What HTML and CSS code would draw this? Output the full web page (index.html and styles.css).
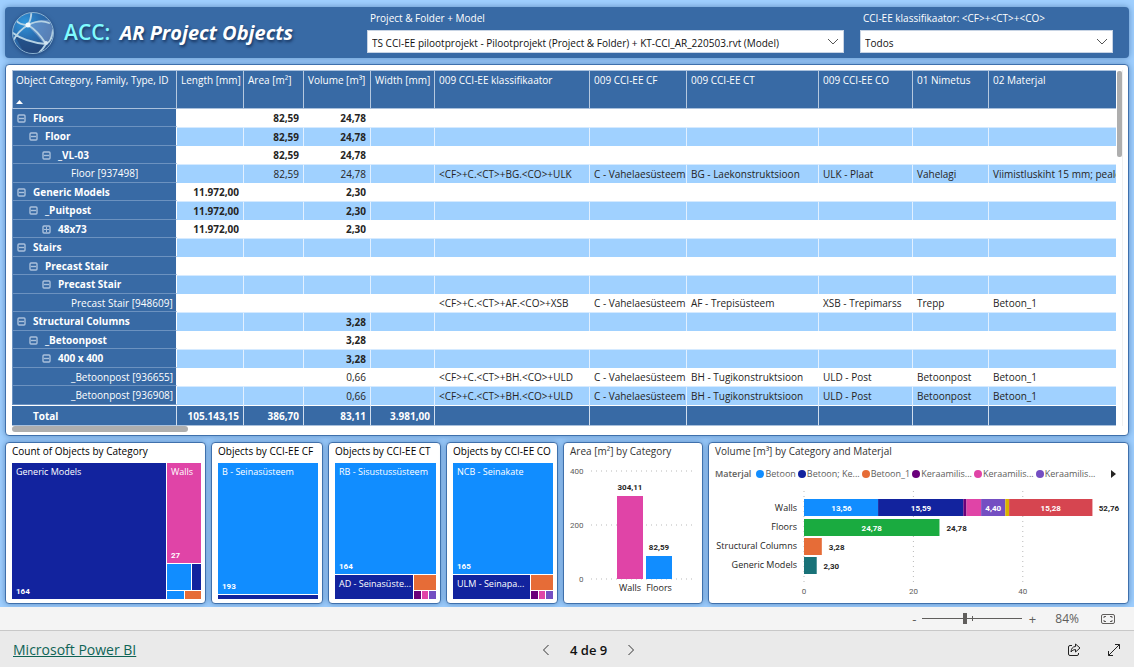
FILE: index.html
```html
<!DOCTYPE html>
<html lang="en">
<head>
<meta charset="utf-8">
<title>ACC: AR Project Objects</title>
<link rel="stylesheet" href="styles.css">
</head>
<body>
<svg class="defs" width="0" height="0" aria-hidden="true">
  <symbol id="minus" viewBox="0 0 9 9"><rect x="1" y="1" width="7" height="7" rx="1" fill="none" stroke="currentColor" stroke-width="1.400"/><path d="M2 4.500h5" stroke="currentColor" stroke-width="1.400"/></symbol>
  <symbol id="plus" viewBox="0 0 9 9"><rect x="1" y="1" width="7" height="7" rx="1" fill="none" stroke="currentColor" stroke-width="1.400"/><path d="M2 4.500h5M4.500 2v5" stroke="currentColor"/></symbol>
</svg>
<main class="report">
  <header class="banner">
    <svg class="globe" viewBox="0 0 44 44" aria-hidden="true">
      <defs>
        <radialGradient id="g1" cx=".3" cy=".25" r=".85"><stop offset="0" stop-color="#2f96dc"/><stop offset=".45" stop-color="#2a6fb2"/><stop offset="1" stop-color="#284f86"/></radialGradient>
        <clipPath id="gc"><circle cx="22" cy="22" r="20"/></clipPath>
      </defs>
      <circle cx="22" cy="22" r="20.500" fill="url(#g1)" stroke="#8db4d3"/>
      <g clip-path="url(#gc)" fill="none" stroke-linecap="round">
        <path d="M17 15Q27 6 42 10L43 25 33 33Q26 24 17 15Z" fill="#7f9fd0" opacity=".55"/>
        <path d="M3 24Q15 29 33 33L28 43H14Z" fill="#1f3f72" opacity=".6"/>
        <path d="M17 14Q8 14 5 9M17 14Q21 6 20 1M17 14Q29 8 38 12M17 14Q27 20 35 33M17 14Q7 20 2 30M2 22Q14 31 35 33M42 19Q41 30 35 33M35 33Q32 38 27 43" stroke="#b5d2e4" stroke-width="1.900"/>
        <circle cx="17" cy="14" r="2.500" fill="#f2f9fd"/><circle cx="35" cy="32" r="2" fill="#d3e6f2"/>
      </g>
    </svg>
    <h1 class="title"><span class="acc">ACC:</span> <em>AR Project Objects</em></h1>
    <div class="field field-model">
      <label for="model">Project &amp; Folder + Model</label>
      <div class="pick">
        <select id="model"><option>TS CCI-EE pilootprojekt - Pilootprojekt (Project &amp; Folder) + KT-CCI_AR_220503.rvt (Model)</option></select>
        <svg viewBox="0 0 12 8" aria-hidden="true"><path d="M1 1l5 5 5-5"/></svg>
      </div>
    </div>
    <div class="field field-class">
      <label for="klass">CCI-EE klassifikaator: &lt;CF&gt;+&lt;CT&gt;+&lt;CO&gt;</label>
      <div class="pick">
        <select id="klass"><option>Todos</option></select>
        <svg viewBox="0 0 12 8" aria-hidden="true"><path d="M1 1l5 5 5-5"/></svg>
      </div>
    </div>
  </header>

  <section class="panel matrix">
    <div class="matrix-body">
    <table>
      <colgroup><col class="c-name"><col class="c-len"><col class="c-area"><col class="c-vol"><col class="c-wid"><col class="c-kl"><col class="c-cf"><col class="c-ct"><col class="c-co"><col class="c-nim"><col></colgroup>
      <thead><tr>
        <th>Object Category, Family, Type, ID<svg class="sort" viewBox="0 0 7 4" aria-hidden="true"><path d="M0 4L3.500 0 7 4z"/></svg></th>
        <th>Length [mm]</th><th>Area [m²]</th><th>Volume [m³]</th><th>Width [mm]</th><th>009 CCI-EE klassifikaator</th><th>009 CCI-EE CF</th><th>009 CCI-EE CT</th><th>009 CCI-EE CO</th><th>01 Nimetus</th><th>02 Materjal</th>
      </tr></thead>
      <tbody>
        <tr class="sum"><th class="l1"><button aria-label="Collapse"><svg><use href="#minus"/></svg></button>Floors</th><td></td><td>82,59</td><td>24,78</td><td></td><td></td><td></td><td></td><td></td><td></td><td></td></tr>
        <tr class="sum"><th class="l2"><button aria-label="Collapse"><svg><use href="#minus"/></svg></button>Floor</th><td></td><td>82,59</td><td>24,78</td><td></td><td></td><td></td><td></td><td></td><td></td><td></td></tr>
        <tr class="sum"><th class="l3"><button aria-label="Collapse"><svg><use href="#minus"/></svg></button>_VL-03</th><td></td><td>82,59</td><td>24,78</td><td></td><td></td><td></td><td></td><td></td><td></td><td></td></tr>
        <tr><th class="l4">Floor [937498]</th><td></td><td>82,59</td><td>24,78</td><td></td><td>&lt;CF&gt;+C.&lt;CT&gt;+BG.&lt;CO&gt;+ULK</td><td>C - Vahelaesüsteem</td><td>BG - Laekonstruktsioon</td><td>ULK - Plaat</td><td>Vahelagi</td><td>Viimistluskiht 15 mm; peale</td></tr>
        <tr class="sum"><th class="l1"><button aria-label="Collapse"><svg><use href="#minus"/></svg></button>Generic Models</th><td>11.972,00</td><td></td><td>2,30</td><td></td><td></td><td></td><td></td><td></td><td></td><td></td></tr>
        <tr class="sum"><th class="l2"><button aria-label="Collapse"><svg><use href="#minus"/></svg></button>_Puitpost</th><td>11.972,00</td><td></td><td>2,30</td><td></td><td></td><td></td><td></td><td></td><td></td><td></td></tr>
        <tr class="sum"><th class="l3"><button aria-label="Expand"><svg><use href="#plus"/></svg></button>48x73</th><td>11.972,00</td><td></td><td>2,30</td><td></td><td></td><td></td><td></td><td></td><td></td><td></td></tr>
        <tr class="sum"><th class="l1"><button aria-label="Collapse"><svg><use href="#minus"/></svg></button>Stairs</th><td></td><td></td><td></td><td></td><td></td><td></td><td></td><td></td><td></td><td></td></tr>
        <tr class="sum"><th class="l2"><button aria-label="Collapse"><svg><use href="#minus"/></svg></button>Precast Stair</th><td></td><td></td><td></td><td></td><td></td><td></td><td></td><td></td><td></td><td></td></tr>
        <tr class="sum"><th class="l3"><button aria-label="Collapse"><svg><use href="#minus"/></svg></button>Precast Stair</th><td></td><td></td><td></td><td></td><td></td><td></td><td></td><td></td><td></td><td></td></tr>
        <tr><th class="l4">Precast Stair [948609]</th><td></td><td></td><td></td><td></td><td>&lt;CF&gt;+C.&lt;CT&gt;+AF.&lt;CO&gt;+XSB</td><td>C - Vahelaesüsteem</td><td>AF - Trepisüsteem</td><td>XSB - Trepimarss</td><td>Trepp</td><td>Betoon_1</td></tr>
        <tr class="sum"><th class="l1"><button aria-label="Collapse"><svg><use href="#minus"/></svg></button>Structural Columns</th><td></td><td></td><td>3,28</td><td></td><td></td><td></td><td></td><td></td><td></td><td></td></tr>
        <tr class="sum"><th class="l2"><button aria-label="Collapse"><svg><use href="#minus"/></svg></button>_Betoonpost</th><td></td><td></td><td>3,28</td><td></td><td></td><td></td><td></td><td></td><td></td><td></td></tr>
        <tr class="sum"><th class="l3"><button aria-label="Collapse"><svg><use href="#minus"/></svg></button>400 x 400</th><td></td><td></td><td>3,28</td><td></td><td></td><td></td><td></td><td></td><td></td><td></td></tr>
        <tr><th class="l4">_Betoonpost [936655]</th><td></td><td></td><td>0,66</td><td></td><td>&lt;CF&gt;+C.&lt;CT&gt;+BH.&lt;CO&gt;+ULD</td><td>C - Vahelaesüsteem</td><td>BH - Tugikonstruktsioon</td><td>ULD - Post</td><td>Betoonpost</td><td>Betoon_1</td></tr>
        <tr><th class="l4">_Betoonpost [936908]</th><td></td><td></td><td>0,66</td><td></td><td>&lt;CF&gt;+C.&lt;CT&gt;+BH.&lt;CO&gt;+ULD</td><td>C - Vahelaesüsteem</td><td>BH - Tugikonstruktsioon</td><td>ULD - Post</td><td>Betoonpost</td><td>Betoon_1</td></tr>
      </tbody>
      <tfoot><tr><th>Total</th><td>105.143,15</td><td>386,70</td><td>83,11</td><td>3.981,00</td><td></td><td></td><td></td><td></td><td></td><td></td></tr></tfoot>
    </table>
    <div class="vbar"><i></i></div>
    </div>
    <div class="hbar"><i></i></div>
  </section>

  <div class="cards">
    <section class="panel card">
      <h2>Count of Objects by Category</h2>
      <div class="tree t-cat">
        <div class="tile navy main"><span>Generic Models</span><b>164</b></div>
        <div class="side">
          <div class="tile pink walls"><span>Walls</span><b>27</b></div>
          <div class="pair p1"><div class="blue"></div><div class="navy"></div></div>
          <div class="pair p2"><div class="blue"></div><div class="orange"></div></div>
        </div>
      </div>
    </section>
    <section class="panel card">
      <h2>Objects by CCI-EE CF</h2>
      <div class="tree t-cf">
        <div class="tile blue"><span>B - Seinasüsteem</span><b>193</b></div>
        <div class="navy"></div>
      </div>
    </section>
    <section class="panel card">
      <h2>Objects by CCI-EE CT</h2>
      <div class="tree t-ct">
        <div class="tile blue"><span>RB - Sisustussüsteem</span><b>164</b></div>
        <div class="low">
          <div class="tile navy"><span>AD - Seinasüste...</span></div>
          <div class="corner"><div class="orange"></div><div class="trio"><div class="purple"></div><div class="pink"></div><div class="violet"></div></div></div>
        </div>
      </div>
    </section>
    <section class="panel card">
      <h2>Objects by CCI-EE CO</h2>
      <div class="tree t-co">
        <div class="tile blue"><span>NCB - Seinakate</span><b>165</b></div>
        <div class="low">
          <div class="tile navy"><span>ULM - Seinapa...</span></div>
          <div class="corner"><div class="orange"></div><div class="trio"><div class="purple"></div><div class="pink"></div><div class="violet"></div></div></div>
        </div>
      </div>
    </section>
    <section class="panel card">
      <h2 class="soft">Area [m²] by Category</h2>
      <svg class="area" role="img" aria-label="Area by category">
        <g class="grid"><path d="M21 8h104M21 62h104M21 116h104"/></g>
        <g class="axis"><text x="0" y="11">400</text><text x="0" y="65">200</text><text x="9" y="119">0</text></g>
        <rect x="47" y="33" width="26" height="83" fill="#e044a7"/>
        <rect x="76" y="93" width="26" height="23" fill="#118dff"/>
        <g class="val"><text x="60" y="27">304,11</text><text x="89" y="87">82,59</text></g>
        <g class="cat"><text x="60" y="128">Walls</text><text x="89" y="128">Floors</text></g>
      </svg>
    </section>
    <section class="panel card">
      <h2 class="soft">Volume [m³] by Category and Materjal</h2>
      <div class="legend">
        <strong>Materjal</strong>
        <span><i class="blue"></i>Betoon</span><span><i class="navy"></i>Betoon; Ke...</span><span><i class="orange"></i>Betoon_1</span><span><i class="purple"></i>Keraamilis...</span><span><i class="pink"></i>Keraamilis...</span><span><i class="violet"></i>Keraamilis...</span>
        <button class="next" aria-label="Next"><svg viewBox="0 0 5 8"><path d="M0 0l5 4-5 4z"/></svg></button>
      </div>
      <div class="volume">
        <div class="names"><span>Walls</span><span>Floors</span><span>Structural Columns</span><span>Generic Models</span></div>
        <svg role="img" aria-label="Volume by category and material">
          <g class="grid"><line x1="0" x2="0" y1="0" y2="92"/><line x1="34.400%" x2="34.400%" y1="0" y2="92"/><line x1="68.800%" x2="68.800%" y1="0" y2="92"/></g>
          <rect x="0" y="8" width="23.300%" height="17" fill="#118dff"/>
          <rect x="23.300%" y="8" width="26.800%" height="17" fill="#12239e"/>
          <rect x="50.100%" y="8" width="1%" height="17" fill="#6b007b"/>
          <rect x="51.100%" y="8" width="4.600%" height="17" fill="#e044a7"/>
          <rect x="55.700%" y="8" width="7.600%" height="17" fill="#744ec2"/>
          <rect x="63.300%" y="8" width="1.200%" height="17" fill="#d9b300"/>
          <rect x="64.500%" y="8" width="26.200%" height="17" fill="#d64550"/>
          <rect x="0" y="28" width="42.600%" height="17" fill="#1aab40"/>
          <rect x="0" y="47" width="5.600%" height="17" fill="#e66c37"/>
          <rect x="0" y="66" width="4%" height="17" fill="#197278"/>
          <g class="val in"><text x="11.800%" y="20">13,56</text><text x="36.800%" y="20">15,59</text><text x="59.500%" y="20">4,40</text><text x="77.600%" y="20">15,28</text><text x="21.300%" y="40">24,78</text></g>
          <g class="val out"><text x="92.700%" y="20">52,76</text><text x="44.800%" y="40">24,78</text><text x="7.800%" y="59">3,28</text><text x="6.100%" y="78">2,30</text></g>
          <g class="axis mid"><text x="0" y="103">0</text><text x="34.400%" y="103">20</text><text x="68.800%" y="103">40</text></g>
        </svg>
      </div>
    </section>
  </div>
</main>

<div class="zoombar">
  <button aria-label="Zoom out">-</button>
  <input type="range" min="0" max="100" value="42" aria-label="Zoom">
  <button aria-label="Zoom in">+</button>
  <span class="pct">84%</span>
  <button class="fit" aria-label="Fit to page"><svg viewBox="0 0 14 10"><rect x=".5" y=".5" width="13" height="9" rx="1.500"/><path d="M3 4V2.500h2M9 2.500h2V4M3 6v1.500h2M9 7.500h2V6"/></svg></button>
</div>

<footer class="foot">
  <a href="#">Microsoft Power BI</a>
  <nav>
    <button aria-label="Previous page"><svg viewBox="0 0 8 12"><path d="M6.500 1L1.500 6l5 5"/></svg></button>
    <span>4 de 9</span>
    <button aria-label="Next page"><svg viewBox="0 0 8 12"><path d="M1.500 1l5 5-5 5"/></svg></button>
  </nav>
  <div class="acts">
    <button aria-label="Share"><svg viewBox="0 0 14 14"><path d="M5 2.500H3A1.500 1.500 0 0 0 1.500 4v7A1.500 1.500 0 0 0 3 12.500h7a1.500 1.500 0 0 0 1.500-1.500v-1M8.500 1l4.500 4-4.500 4V6.500Q5.500 6.500 4 9q.3-5.300 4.500-5.500z"/></svg></button>
    <button aria-label="Full screen"><svg viewBox="0 0 14 14"><path d="M1.500 12.500l11-11M8 1.500h4.500V6M1.500 8v4.500H6"/></svg></button>
  </div>
</footer>
</body>
</html>
```
FILE: styles.css
```css
* { box-sizing: border-box; }
body {
  margin: 0;
  min-height: 100vh;
  display: flex;
  flex-direction: column;
  background: #eaeaea;
  font: 10px/14px "Open Sans", "Noto Sans", sans-serif;
  color: #252423;
}
button { border: 0; padding: 0; background: none; color: inherit; font: inherit; }
svg { display: block; }
.defs { position: absolute; }

.navy { background: #12239e; }
.blue { background: #118dff; }
.pink { background: #e044a7; }
.orange { background: #e66c37; }
.purple { background: #6b007b; }
.violet { background: #744ec2; }

.report {
  display: flex;
  flex-direction: column;
  gap: 6px;
  padding: 7px 5px 3px;
  background: #9fcffe;
}

/* banner */
.banner {
  display: flex;
  align-items: flex-start;
  height: 51px;
  padding: 4px 16px 0 6px;
  border-radius: 4px;
  background: #386aa5;
  box-shadow: 0 0 6px #5d8cc0;
  color: #fff;
}
.globe { width: 44px; height: 44px; flex: none; filter: drop-shadow(0 1px 2px #1f4478); }
.title {
  flex: none;
  width: 312px;
  margin: 6px 0 0;
  padding-left: 9px;
  font: 600 21px/30px "Open Sans", "Noto Sans", sans-serif;
  white-space: nowrap;
  text-shadow: 1px 2px 3px #16325c;
}
.title .acc { color: #80fbff; margin-right: 4px; }
.title em { font-weight: 700; font-size: 20px; }
.field { display: flex; flex-direction: column; gap: 5px; }
.field-model { flex: 477 1 0; margin-right: 16px; }
.field-class { flex: 253 1 0; }
.field label { padding-left: 3px; }
.pick { display: grid; align-items: center; }
.pick > * { grid-area: 1 / 1; }
.pick select {
  width: 100%;
  height: 23px;
  padding: 2px 24px 0 4px;
  border: 1px solid #c8d4e4;
  border-radius: 0;
  appearance: none;
  background: #fff;
  color: #111;
  font: inherit;
}
.pick svg { width: 12px; height: 8px; justify-self: end; margin-right: 5px; pointer-events: none; fill: none; stroke: #555; }

.panel {
  border: 1px solid #3f70ac;
  border-radius: 4px;
  background: #fff;
  box-shadow: 0 0 6px #5d8cc0;
}

/* matrix */
.matrix { padding: 5px 5px 3px 6px; }
.matrix-body { display: flex; gap: 1px; }
table { flex: 1; min-width: 0; width: 100%; table-layout: fixed; border-collapse: separate; border-spacing: 0; }
.c-name { width: 165px; }
.c-len, .c-vol { width: 67px; }
.c-area { width: 60px; }
.c-wid { width: 64px; }
.c-kl { width: 155px; }
.c-cf { width: 97px; }
.c-ct { width: 132px; }
.c-co { width: 94px; }
.c-nim { width: 76px; }
th, td { padding: 0 0 0 4px; overflow: hidden; white-space: nowrap; text-align: left; font-weight: 400; line-height: 14px; }
th, tfoot td { background: #386aa5; color: #fff; }
thead th { height: 39px; padding-top: 2px; vertical-align: top; border-top: 1px solid #a9c0dc; border-right: 1px solid #b5c8df; border-bottom: 1px solid #a9c0dc; }
thead th:first-child { border-left: 1px solid #a9c0dc; padding-left: 3px; }
.sort { width: 7px; height: 4px; margin-top: 13px; fill: #fff; }
tbody td, tfoot td { border-right: 1px solid #e2f0ff; }
tbody td:last-child, tfoot td:last-child, thead th:last-child { border-right: 0; }
tr:nth-child(n) td:nth-child(-n+5) { text-align: right; padding-right: 4px; }
tbody tr { height: 18px; }
tbody tr:nth-child(even) { height: 19px; }
tbody tr:nth-child(even) td { background: #a0d1ff; border-top: 1px solid #d5eaff; }
tbody tr:nth-child(odd) td { border-color: #fff; }
tbody th { border-bottom: 1px solid #6c92c0; border-right: 1px solid #fff; border-left: 1px solid #6c92c0; }
.sum th, .sum td, tfoot th, tfoot td { font-weight: 700; }
tbody .l1 { padding-left: 4px; }
tbody .l2 { padding-left: 16px; }
tbody .l3 { padding-left: 29px; }
tbody .l4 { padding-left: 58px; }
tbody button { display: inline-block; width: 9px; height: 9px; margin-right: 7px; color: #a9c0dc; vertical-align: -1px; }
tbody button svg { width: 9px; height: 9px; }
tfoot tr { height: 21px; }
tfoot th { padding-left: 21px; }
tfoot th, tfoot td { border-top: 1px solid #fff; border-bottom: 1px solid #a9c0dc; }
tfoot td, tfoot th { border-right: 1px solid #d0dded; }
.vbar { flex: none; width: 6px; padding-top: 1px; border-right: 1px solid #f0f0f0; }
.vbar i { display: block; height: 86px; border-radius: 2px; background: #aeaeae; }
.hbar i { display: block; width: 176px; height: 6px; border-radius: 3px; background: #aeaeae; }

/* cards */
.cards { display: grid; grid-template-columns: 201fr 112fr 113fr 112fr 140fr 421fr; gap: 5px; }
.card { display: flex; flex-direction: column; min-width: 0; height: 162px; padding: 1px 4px 4px 6px; }
h2 { margin: 0; color: #000; font: inherit; line-height: 14px; white-space: nowrap; }
.card .soft { color: #333; }
.tree { flex: 1; min-height: 0; display: grid; gap: 1px; margin-top: 5px; }
.tree div { min-width: 0; min-height: 0; }
.tile { display: flex; flex-direction: column; justify-content: space-between; padding: 2px 4px 1px; color: #fff; overflow: hidden; white-space: nowrap; font-size: 9px; }
.tile b { font: 700 8px/12px "Roboto", sans-serif; }
.t-cat { grid-template-columns: 154fr 34fr; }
.side { display: grid; grid-template-rows: 101fr 26fr 8fr; gap: 1px; }
.pair { display: grid; gap: 1px; }
.p1 { grid-template-columns: 24fr 9fr; }
.p2 { grid-template-columns: 1fr 1fr; }
.t-cf { grid-template-rows: 131fr 4fr; }
.t-ct, .t-co { grid-template-rows: 111fr 24fr; }
.low { display: grid; grid-template-columns: 78fr 22fr; gap: 1px; }
.low .tile { padding-right: 0; }
.corner { display: grid; grid-template-rows: 15fr 8fr; gap: 1px; }
.trio { display: grid; grid-template-columns: 1fr 1fr 1fr; gap: 1px; }

.area { width: 100%; flex: 1; min-height: 0; margin-top: 5px; overflow: visible; }
.grid { stroke: #b9b9b9; stroke-width: 1; stroke-dasharray: 1 4; }
.axis { font: 8px "Roboto", sans-serif; fill: #605e5c; }
.mid { text-anchor: middle; }
.val { font: 700 8px "Roboto", sans-serif; fill: #252423; text-anchor: middle; }
.val.in { fill: #fff; }
.val.out { text-anchor: start; }
.cat { font: 9px "Open Sans", "Noto Sans", sans-serif; fill: #252423; text-anchor: middle; }

.legend { display: flex; align-items: center; gap: 2px; height: 14px; margin-top: 9px; font-size: 9px; line-height: 14px; color: #605e5c; white-space: nowrap; }
.legend strong { font-weight: 600; margin-right: 3px; }
.legend span { display: flex; align-items: center; gap: 1px; }
.legend i { width: 8px; height: 8px; border-radius: 50%; }
.legend .next { margin: 0 8px 0 auto; }
.legend .next svg { width: 5px; height: 8px; fill: #252423; }
.volume { display: flex; gap: 7px; height: 110px; margin-top: 10px; padding-right: 2px; }
.names { flex: none; width: 82px; display: flex; flex-direction: column; gap: 6px; padding-top: 10px; text-align: right; font-size: 9px; line-height: 13px; white-space: nowrap; }
.volume svg { flex: 1; min-width: 0; height: 110px; overflow: visible; }

/* zoom strip */
.zoombar {
  display: flex;
  align-items: center;
  justify-content: flex-end;
  height: 24px;
  padding-right: 19px;
  border-bottom: 1px solid #c8c8c8;
  background: #f4f4f4;
  color: #605e5c;
  font-size: 13px;
}
.zoombar > button { width: 10px; text-align: center; }
.zoombar input {
  appearance: none;
  width: 100px;
  height: 12px;
  margin: 0 5px 0 3px;
  background:
    linear-gradient(#605e5c, #605e5c) 50px 50% / 1px 5px no-repeat,
    linear-gradient(#605e5c, #605e5c) 0 50% / 100% 1px no-repeat;
}
.zoombar input::-webkit-slider-thumb { appearance: none; width: 4px; height: 11px; background: #605e5c; }
.pct { margin: 0 22px 0 18px; font-size: 12px; }
.zoombar .fit { width: 14px; }
.fit svg { width: 14px; height: 10px; fill: none; stroke: #605e5c; }

/* footer */
.foot { flex: 1; min-height: 36px; display: flex; align-items: center; justify-content: space-between; padding-left: 13px; padding-top: 2px; font-size: 14px; line-height: 20px; }
.foot a { color: #0f6456; }
.foot nav { display: flex; align-items: center; gap: 20px; color: #111; font-weight: 600; font-size: 13px; }
.foot nav svg { width: 8px; height: 12px; fill: none; stroke: #333; }
.acts { display: flex; margin-left: 13px; }
.acts button { width: 40px; display: grid; place-items: center; }
.acts svg { width: 14px; height: 14px; fill: none; stroke: #222; }
```
